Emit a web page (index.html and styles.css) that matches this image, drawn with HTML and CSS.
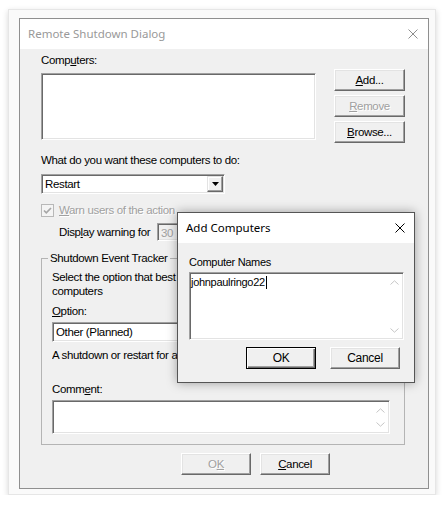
FILE: index.html
```html
<!DOCTYPE html>
<html lang="en">
<head>
    <meta charset="UTF-8">
    <meta name="viewport" content="width=device-width, initial-scale=1.0">
    <title>Remote Shutdown Dialog</title>
    <link rel="stylesheet" href="styles.css">
</head>
<body>
    <div class="frame">
        <div class="window">
            <div class="titlebar">
                <span class="title">Remote Shutdown Dialog</span>
                <svg class="close" width="10" height="10" viewBox="0 0 10 10">
                    <path d="M0.5 0.5L9.5 9.5M9.5 0.5L0.5 9.5" stroke="#8e8e8e" stroke-width="1" fill="none"/>
                </svg>
            </div>

            <div class="client">
                <div class="computers">
                    <div class="computers-left">
                        <div class="label first">Comp<u>u</u>ters:</div>
                        <div class="field listbox"></div>
                    </div>
                    <div class="side-buttons">
                        <button class="btn"><u>A</u>dd...</button>
                        <button class="btn" disabled><u>R</u>emove</button>
                        <button class="btn"><u>B</u>rowse...</button>
                    </div>
                </div>

                <div class="label what">What do you want these computers to do:</div>
                <div class="field combo action">
                    <span class="combo-text">Restart</span>
                    <span class="combo-arrow">
                        <svg width="7" height="4" viewBox="0 0 7 4"><path d="M0 0H7L3.5 4Z" fill="#000"/></svg>
                    </span>
                </div>

                <div class="check-row">
                    <span class="checkbox">
                        <svg width="11" height="11" viewBox="0 0 11 11">
                            <path d="M2 5.5L4.3 7.8L9 3" stroke="#a6a6a6" stroke-width="1.7" fill="none"/>
                        </svg>
                    </span>
                    <span class="muted"><u>W</u>arn users of the action</span>
                </div>

                <div class="warn-row">
                    <span class="warn-label">Disp<u>l</u>ay warning for</span>
                    <span class="field minutes">30</span>
                </div>

                <fieldset class="tracker">
                    <legend>Shutdown Event Tracker</legend>
                    <div class="line">Select the option that best describes why</div>
                    <div class="line">computers</div>
                    <div class="label option"><u>O</u>ption:</div>
                    <div class="field combo reason">
                        <span class="combo-text">Other (Planned)</span>
                        <span class="combo-arrow">
                            <svg width="7" height="4" viewBox="0 0 7 4"><path d="M0 0H7L3.5 4Z" fill="#000"/></svg>
                        </span>
                    </div>
                    <div class="line note">A shutdown or restart for an unknown reason</div>
                    <div class="label comment-label">Comm<u>e</u>nt:</div>
                    <div class="field comment">
                        <div class="scroll">
                            <svg width="9" height="5" viewBox="0 0 9 5"><path d="M0.5 4.5L4.5 0.8L8.5 4.5" stroke="#c6c6c6" fill="none"/></svg>
                            <svg width="9" height="5" viewBox="0 0 9 5"><path d="M0.5 0.5L4.5 4.2L8.5 0.5" stroke="#c6c6c6" fill="none"/></svg>
                        </div>
                    </div>
                </fieldset>

                <div class="dialog-buttons">
                    <button class="btn" disabled>O<u>K</u></button>
                    <button class="btn"><u>C</u>ancel</button>
                </div>
            </div>

            <!-- child dialog opened by Add... -->
            <div class="add-dialog">
                <div class="add-title">
                    <span>Add Computers</span>
                    <svg width="10" height="10" viewBox="0 0 10 10">
                        <path d="M0.5 0.5L9.5 9.5M9.5 0.5L0.5 9.5" stroke="#000" stroke-width="1" fill="none"/>
                    </svg>
                </div>
                <div class="add-body">
                    <div class="add-label">Computer Names</div>
                    <div class="field names">
                        <span class="names-text">johnpaulringo22<span class="caret"></span></span>
                        <div class="scroll">
                            <svg width="9" height="5" viewBox="0 0 9 5"><path d="M0.5 4.5L4.5 0.8L8.5 4.5" stroke="#c6c6c6" fill="none"/></svg>
                            <svg width="9" height="5" viewBox="0 0 9 5"><path d="M0.5 0.5L4.5 4.2L8.5 0.5" stroke="#c6c6c6" fill="none"/></svg>
                        </div>
                    </div>
                    <div class="add-buttons">
                        <button class="btn default">OK</button>
                        <button class="btn">Cancel</button>
                    </div>
                </div>
            </div>
        </div>
    </div>
</body>
</html>
```

FILE: styles.css
```css
* {
    margin: 0;
    padding: 0;
    box-sizing: border-box;
}

body {
    background: #fff;
    font-family: "Liberation Sans", Arial, sans-serif;
    font-size: 11.5px;
    line-height: 14px;
    letter-spacing: -0.35px;
    color: #000;
}

u {
    text-decoration: underline;
    text-underline-offset: 1px;
}

/* outer screenshot frame with soft shadow */
.frame {
    margin: 9px 0 0 8px;
    width: 428px;
    height: 486px;
    padding: 8px 0 0 10px;
    background: #fafafa;
    border: 1px solid #e6e6e6;
    box-shadow: 0 2px 6px rgba(0, 0, 0, 0.16);
}

.window {
    position: relative;
    width: 410px;
    height: 471px;
    border: 1px solid #8f8f8f;
    display: flex;
    flex-direction: column;
}

.titlebar {
    height: 30px;
    background: #fff;
    display: flex;
    align-items: center;
    justify-content: space-between;
    padding: 0 10px 0 8px;
}

.title {
    font-family: "Noto Sans", sans-serif;
    font-size: 11.5px;
    letter-spacing: 0;
    color: #999;
}

.client {
    flex: 1;
    background: #f0f0f0;
    padding: 0 23px 0 21px;
}

/* sunken 3d field */
.field {
    background: #fff;
    border: 1px solid;
    border-color: #a0a0a0 #fff #fff #a0a0a0;
    box-shadow: inset 1px 1px 0 #696969, inset -1px -1px 0 #e3e3e3;
}

/* raised 3d button */
.btn {
    height: 22px;
    width: 71px;
    font: inherit;
    letter-spacing: inherit;
    color: #000;
    background: #f0f0f0;
    border: 1px solid;
    border-color: #fff #696969 #696969 #fff;
    box-shadow: inset -1px -1px 0 #a0a0a0, inset 1px 1px 0 #e3e3e3;
}

.btn:disabled {
    color: #a0a0a0;
    text-shadow: 1px 1px 0 #fff;
}

.muted {
    color: #a0a0a0;
    text-shadow: 1px 1px 0 #fff;
}

.computers {
    display: flex;
    gap: 18px;
}

.computers-left {
    width: 275px;
}

.label.first {
    margin-top: 4px;
}

.listbox {
    margin-top: 6px;
    height: 67px;
}

.side-buttons {
    width: 71px;
    margin-top: 20px;
    display: flex;
    flex-direction: column;
    gap: 4px;
}

.what {
    margin-top: 10px;
}

.combo {
    height: 20px;
    padding: 1px;
    display: flex;
    align-items: center;
}

.combo-text {
    flex: 1;
    padding-left: 2px;
    white-space: nowrap;
}

.combo-arrow {
    width: 16px;
    height: 16px;
    display: flex;
    align-items: center;
    justify-content: center;
    background: #f0f0f0;
    border: 1px solid;
    border-color: #e3e3e3 #696969 #696969 #e3e3e3;
    box-shadow: inset -1px -1px 0 #a0a0a0, inset 1px 1px 0 #fff;
}

.action {
    margin-top: 7px;
    width: 184px;
}

.check-row {
    margin-top: 9px;
    display: flex;
    align-items: center;
}

.checkbox {
    width: 13px;
    height: 13px;
    margin-right: 5px;
    border: 1px solid #b8b8b8;
    background: #f4f4f4;
    display: flex;
}

.warn-row {
    margin-top: 6px;
    height: 18px;
    padding-left: 18px;
    display: flex;
    align-items: center;
    white-space: nowrap;
}

.warn-label {
    width: 98px;
}

.minutes {
    width: 36px;
    height: 18px;
    padding: 2px 0 0 3px;
    background: #f0f0f0;
    color: #a0a0a0;
}

.tracker {
    margin-top: 10px;
    width: 364px;
    min-width: 0;
    border: 1px solid #b4b4b4;
    padding: 5px 10px 10px 10px;
}

.tracker legend {
    margin-left: -4px;
    padding: 0 2px;
    line-height: 14px;
}

.line {
    white-space: nowrap;
    overflow: hidden;
}

.option {
    margin-top: 6px;
}

.reason {
    margin-top: 4px;
    width: 338px;
}

.note {
    margin-top: 6px;
}

.comment-label {
    margin-top: 20px;
}

.comment {
    margin-top: 4px;
    width: 338px;
    height: 34px;
    display: flex;
}

.scroll {
    margin-left: auto;
    width: 17px;
    display: flex;
    flex-direction: column;
    align-items: center;
    justify-content: space-between;
    padding: 7px 0 6px;
}

.dialog-buttons {
    margin: 8px 0 0 140px;
    display: flex;
    gap: 9px;
}

.dialog-buttons .btn {
    width: 70px;
}

/* Add Computers child dialog */
.add-dialog {
    position: absolute;
    left: 157px;
    top: 193px;
    width: 238px;
    height: 171px;
    background: #f0f0f0;
    border: 1px solid #555;
    box-shadow: 0 0 10px rgba(0, 0, 0, 0.35);
    display: flex;
    flex-direction: column;
}

.add-title {
    height: 30px;
    background: #fff;
    display: flex;
    align-items: center;
    justify-content: space-between;
    padding: 0 9px 0 8px;
    font-family: "Noto Sans", sans-serif;
    font-size: 11.5px;
    letter-spacing: 0;
}

.add-body {
    padding: 0 10px 0 11px;
    font-size: 11px;
    letter-spacing: -0.3px;
}

.add-label {
    margin-top: 12px;
}

.names {
    margin-top: 3px;
    height: 68px;
    display: flex;
    padding: 1px 0 0 1px;
}

.names-text {
    display: flex;
    align-items: center;
    height: 14px;
    margin-top: 1px;
}

.caret {
    width: 1px;
    height: 13px;
    margin-left: 1px;
    background: #000;
}

.names .scroll {
    padding: 6px 0 6px;
}

.add-buttons {
    margin-top: 7px;
    padding-right: 4px;
    display: flex;
    justify-content: flex-end;
    gap: 14px;
}

.add-buttons .btn {
    width: 70px;
    font-size: 12px;
}

.btn.default {
    border-color: #000;
    box-shadow: inset 1px 1px 0 #fff, inset -1px -1px 0 #696969, inset -2px -2px 0 #a0a0a0;
}
```
